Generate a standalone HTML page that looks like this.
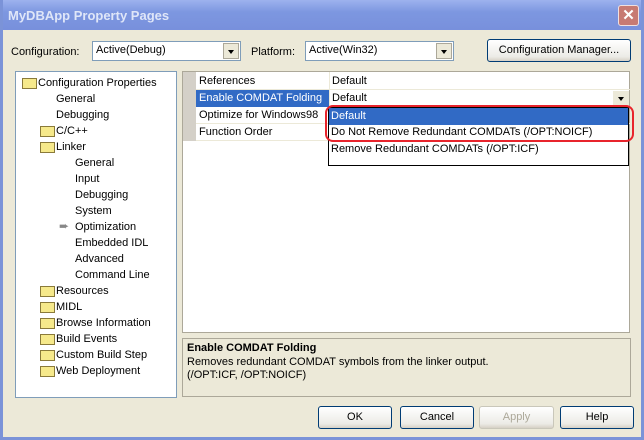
<!DOCTYPE html>
<html><head><style>
*{margin:0;padding:0;box-sizing:border-box}
body{width:644px;height:440px;overflow:hidden;background:#ece9d8;font-family:Tahoma,"Liberation Sans",sans-serif;font-size:11px;color:#000;position:relative}
.abs{position:absolute}
.frame{position:absolute;left:0;top:0;width:644px;height:440px;border:3px solid #7b93d8;border-top:none}
.title{left:0;top:0;width:644px;height:30px;background:linear-gradient(#9db2ee,#7d97e0 40%,#7890dc);color:#dfe6f8;font-weight:bold;font-size:13px;padding:8px 0 0 8px}
.close{right:5px;top:5px;width:21px;height:21px;background:#c77a73;border:1px solid #f0e0e0;border-radius:3px;color:#fff;text-align:center;font-size:15px;line-height:19px;font-weight:bold}
.combo{background:#fff;border:1px solid #7f9db9;height:20px;padding:2px 3px}
.arr{position:absolute;right:1px;top:1px;width:16px;height:16px;background:#ece9d8;border:1px solid #aca899}
.arr:after{content:"";position:absolute;left:4px;top:6px;border:3px solid transparent;border-top:4px solid #000}
.btn{border:1px solid #003c74;border-radius:3px;background:linear-gradient(#fff,#ecebe6 80%,#d6d0c5);text-align:center;line-height:21px;height:23px}
.tree{left:15px;top:71px;width:162px;height:327px;background:#fff;border:1px solid #7f9db9}
.ti{position:absolute;white-space:nowrap}
.fold{position:absolute;width:15px;height:11px;background:#f6e98b;border:1px solid #8a7a3a}
.grid{left:182px;top:71px;width:448px;height:262px;background:#fff;border:1px solid #aca899}
.row{position:absolute;left:13px;width:434px;height:17px;border-bottom:1px solid #ece9d8}
.row span{position:absolute;top:2px}
</style></head><body>
<div class="abs title">MyDBApp Property Pages</div>
<div class="abs close">✕</div>
<div class="frame"></div>

<div class="abs" style="left:11px;top:46px">Configuration:</div>
<div class="abs combo" style="left:92px;top:41px;width:149px">Active(Debug)<div class="arr"></div></div>
<div class="abs" style="left:251px;top:46px">Platform:</div>
<div class="abs combo" style="left:305px;top:41px;width:149px">Active(Win32)<div class="arr"></div></div>
<div class="abs btn" style="left:487px;top:39px;width:144px">Configuration Manager...</div>

<div class="abs tree">
<div class="fold" style="left:6px;top:6px"></div><div class="ti" style="left:22px;top:5px">Configuration Properties</div>
<div class="ti" style="left:40px;top:21px">General</div>
<div class="ti" style="left:40px;top:37px">Debugging</div>
<div class="fold" style="left:24px;top:54px"></div><div class="ti" style="left:40px;top:53px">C/C++</div>
<div class="fold" style="left:24px;top:70px"></div><div class="ti" style="left:40px;top:69px">Linker</div>
<div class="ti" style="left:59px;top:85px">General</div>
<div class="ti" style="left:59px;top:101px">Input</div>
<div class="ti" style="left:59px;top:117px">Debugging</div>
<div class="ti" style="left:59px;top:133px">System</div>
<div class="ti" style="left:43px;top:147px;color:#888;font-size:12px">➨</div><div class="ti" style="left:59px;top:149px">Optimization</div>
<div class="ti" style="left:59px;top:165px">Embedded IDL</div>
<div class="ti" style="left:59px;top:181px">Advanced</div>
<div class="ti" style="left:59px;top:197px">Command Line</div>
<div class="fold" style="left:24px;top:214px"></div><div class="ti" style="left:40px;top:213px">Resources</div>
<div class="fold" style="left:24px;top:230px"></div><div class="ti" style="left:40px;top:229px">MIDL</div>
<div class="fold" style="left:24px;top:246px"></div><div class="ti" style="left:40px;top:245px">Browse Information</div>
<div class="fold" style="left:24px;top:262px"></div><div class="ti" style="left:40px;top:261px">Build Events</div>
<div class="fold" style="left:24px;top:278px"></div><div class="ti" style="left:40px;top:277px">Custom Build Step</div>
<div class="fold" style="left:24px;top:294px"></div><div class="ti" style="left:40px;top:293px">Web Deployment</div>
</div>

<div class="abs grid">
<div class="abs" style="left:0;top:0;width:13px;height:69px;background:#d4d0c8"></div>
<div class="row" style="top:1px"><span style="left:3px">References</span><span style="left:136px">Default</span></div>
<div class="row" style="top:18px"><span style="left:0;top:0;width:133px;height:17px;background:#316ac5"></span><span style="left:3px;color:#fff">Enable COMDAT Folding</span><span style="left:136px">Default</span></div>
<div class="row" style="top:35px"><span style="left:3px">Optimize for Windows98</span></div>
<div class="row" style="top:52px"><span style="left:3px">Function Order</span></div>
<div class="abs" style="left:146px;top:0;width:1px;height:69px;background:#ece9d8"></div>
<div class="abs" style="left:430px;top:19px;width:16px;height:16px;background:#ece9d8"><div style="position:absolute;left:5px;top:6px;border:3px solid transparent;border-top:4px solid #000"></div></div>
</div>

<div class="abs" style="left:328px;top:107px;width:301px;height:59px;background:#fff;border:1px solid #000">
<div style="height:17px;background:#316ac5;color:#fff;padding:2px 2px">Default</div>
<div style="height:17px;padding:1px 2px">Do Not Remove Redundant COMDATs (/OPT:NOICF)</div>
<div style="height:17px;padding:1px 2px">Remove Redundant COMDATs (/OPT:ICF)</div>
</div>
<div class="abs" style="left:325px;top:105px;width:309px;height:37px;border:2px solid #e8242c;border-radius:8px"></div>

<div class="abs" style="left:182px;top:338px;width:449px;height:59px;border:1px solid #aca899">
<div style="font-weight:bold;padding:3px 4px 0">Enable COMDAT Folding</div>
<div style="padding:2px 4px 0;line-height:13px">Removes redundant COMDAT symbols from the linker output.<br>(/OPT:ICF, /OPT:NOICF)</div>
</div>

<div class="abs btn" style="left:318px;top:406px;width:74px">OK</div>
<div class="abs btn" style="left:400px;top:406px;width:74px">Cancel</div>
<div class="abs btn" style="left:479px;top:406px;width:75px;color:#aca899;border-color:#c9c7ba">Apply</div>
<div class="abs btn" style="left:560px;top:406px;width:74px">Help</div>
</body></html>
